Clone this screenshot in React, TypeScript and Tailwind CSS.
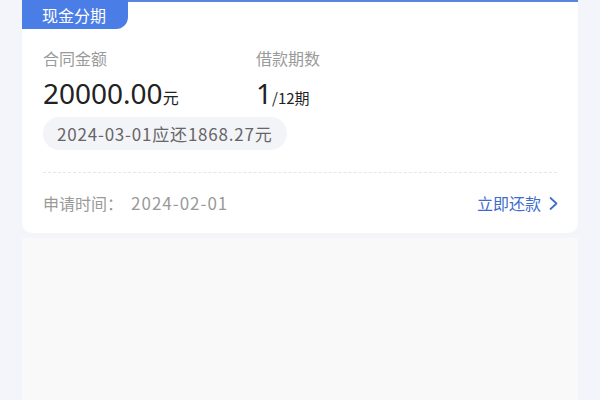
const FONT = { fontFamily: '"Noto Sans CJK SC", "Noto Sans", sans-serif' };
const NUM = { fontFamily: '"Noto Sans", sans-serif' };

export default function App() {
  return (
    <div className="w-[600px] h-[400px] bg-[#f4f5fa] overflow-hidden" style={FONT}>
      <div className="mx-[22px] flex flex-col h-full">
        {/* Card */}
        <div className="bg-white rounded-b-[10px] border-t-2 border-[#5b84e0] h-[233px] flex flex-col">
          <div className="flex">
            <div className="-mt-[2px] h-[29px] w-[106px] bg-[#4a7de6] rounded-br-[12px] flex items-center pl-[20px] text-white text-[16px]">
              现金分期
            </div>
          </div>

          <div className="px-[21px] pt-[18px] flex">
            <div className="w-[213px]">
              <div className="text-[16px] text-[#9a9a9a] leading-[22px]">合同金额</div>
              <div className="mt-[6px] flex items-baseline text-[#222]">
                <span className="text-[28px] leading-[36px]" style={NUM}>20000.00</span>
                <span className="text-[16px]">元</span>
              </div>
            </div>
            <div>
              <div className="text-[16px] text-[#9a9a9a] leading-[22px]">借款期数</div>
              <div className="mt-[6px] flex items-baseline text-[#222]">
                <span className="text-[28px] leading-[36px]" style={NUM}>1</span>
                <span className="text-[15px]">/12期</span>
              </div>
            </div>
          </div>

          <div className="px-[21px] mt-[6px] flex">
            <div className="h-[33px] px-[14px] rounded-full bg-[#f3f4f8] flex items-center text-[17px] tracking-[0.8px] text-[#666]">
              2024-03-01应还1868.27元
            </div>
          </div>

          <div className="mx-[21px] mt-[22px] border-t border-dashed border-[#e6e6e6]" />

          <div className="px-[21px] pr-[20px] flex-1 flex items-center justify-between">
            <div className="text-[16px] text-[#9a9a9a]">
              申请时间：<span className="ml-[8px] text-[17px] tracking-[1px]">2024-02-01</span>
            </div>
            <div className="flex items-center gap-[8px] text-[16px] text-[#3e6ccc]">
              立即还款
              <svg width="9" height="15" viewBox="0 0 9 15" fill="none" stroke="currentColor" strokeWidth="1.7" strokeLinecap="round" strokeLinejoin="round">
                <path d="M1.5 2 L7.5 7.5 L1.5 13" />
              </svg>
            </div>
          </div>
        </div>

        {/* Lower area */}
        <div className="mt-[5px] flex-1 bg-[#f9f9f9]" />
      </div>
    </div>
  );
}
